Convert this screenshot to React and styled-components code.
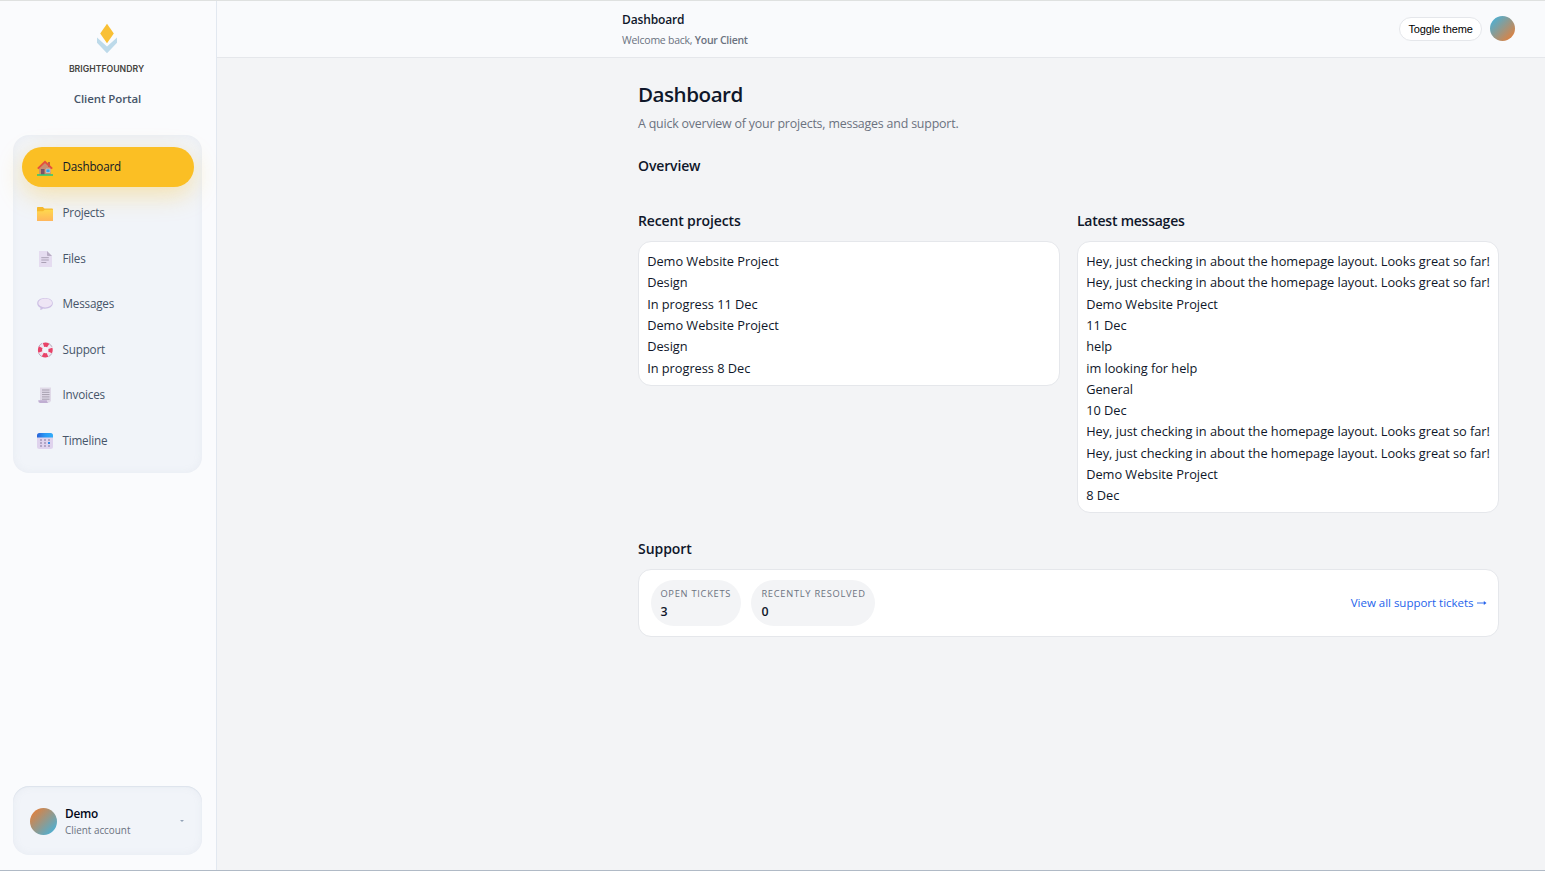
import styled, { createGlobalStyle } from 'styled-components';

const GlobalStyle = createGlobalStyle`
  * {
    box-sizing: border-box;
  }

  body {
    margin: 0;
    font-family: 'Open Sans', 'Noto Sans', sans-serif;
    font-size: 12.8px;
    line-height: 21.3px;
    color: #0f172a;
    background: #f3f4f6;
  }

  h1, h2, p {
    margin: 0;
  }
`;

const Shell = styled.div`
  display: grid;
  grid-template-columns: 217px 1fr;
  height: 871px;
  border-top: 1px solid #dfe1e0;
  border-bottom: 1px solid #b0bac6;
`;

const Sidebar = styled.aside`
  display: flex;
  flex-direction: column;
  padding: 20px 14px 15px 13px;
  background: #fafbfd;
  border-right: 1px solid #e2e8f0;
`;

const Brand = styled.div`
  display: flex;
  flex-direction: column;
  align-items: center;
  height: 114px;
  padding: 2px 2px 0 0;
`;

const BrandName = styled.div`
  margin-top: 8px;
  font-family: Inter, sans-serif;
  font-size: 8.7px;
  font-weight: 600;
  line-height: 14px;
  color: #45443f;
`;

const PortalLabel = styled.div`
  margin: 13px 0 0 2px;
  font-size: 11.5px;
  font-weight: 600;
  line-height: 20px;
  letter-spacing: -0.1px;
  color: #475569;
`;

const Nav = styled.nav`
  display: flex;
  flex-direction: column;
  gap: 5.6px;
  height: 338px;
  padding: 12px 8px 0 9px;
  border-radius: 16px;
  background: #f1f4f9;
  box-shadow: inset 0 0 9px rgba(148, 150, 180, 0.09);
`;

const NavItem = styled.a`
  display: flex;
  align-items: center;
  gap: 9.5px;
  height: 40px;
  padding-left: 15px;
  border-radius: 20px;
  font-size: 11.7px;
  letter-spacing: -0.2px;
  color: ${props => (props.$active ? '#111827' : '#475569')};
  background: ${props => (props.$active ? '#fbbf24' : 'transparent')};
  box-shadow: ${props => (props.$active ? '0 8px 24px rgba(251, 191, 36, 0.35)' : 'none')};

  svg {
    margin-top: 1px;
  }
`;

const Account = styled.div`
  display: flex;
  align-items: center;
  gap: 8px;
  height: 69px;
  margin-top: auto;
  padding: 1px 18px 0 17px;
  border-radius: 16px;
  background: #f1f4f9;
  box-shadow: inset 0 0 9px rgba(148, 150, 180, 0.09), inset 0 1px 1px #e0e7ef;
`;

const Avatar = styled.div`
  flex: none;
  width: ${props => props.$size}px;
  height: ${props => props.$size}px;
  border-radius: 50%;
  background: linear-gradient(135deg, ${props => props.$from}, ${props => props.$to});
`;

const AccountText = styled.div`
  flex: 1;
`;

const AccountName = styled.div`
  font-size: 11.8px;
  font-weight: 600;
  line-height: 18px;
  letter-spacing: -0.2px;
  color: #020617;
`;

const AccountRole = styled.div`
  font-size: 9.9px;
  line-height: 16px;
  color: #6b7280;
`;

const Caret = styled.span`
  border: 2.5px solid transparent;
  border-top: 2.5px solid #94a3b8;
  border-bottom: 0;
`;

const Main = styled.div`
  display: flex;
  flex-direction: column;
`;

const Topbar = styled.header`
  display: flex;
  justify-content: space-between;
  align-items: flex-start;
  height: 57px;
  padding: 0 30px 0 405px;
  background: #f9fafc;
  border-bottom: 1px solid #e5e7eb;
`;

const TopbarText = styled.div`
  padding-top: 9px;
`;

const TopbarTitle = styled.div`
  font-size: 12px;
  font-weight: 600;
  line-height: 20px;
  letter-spacing: -0.14px;
`;

const Welcome = styled.div`
  font-size: 10.5px;
  line-height: 21px;
  letter-spacing: -0.24px;
  color: #6b7280;

  strong {
    font-weight: 600;
    letter-spacing: -0.28px;
  }
`;

const TopbarActions = styled.div`
  display: flex;
  align-items: center;
  gap: 8px;
  padding-top: 15px;
`;

const ThemeButton = styled.button`
  width: 83px;
  height: 24px;
  padding: 0;
  border: 1px solid #e5e7eb;
  border-radius: 12px;
  background: #fff;
  font-family: 'Liberation Sans', sans-serif;
  font-size: 11px;
  letter-spacing: -0.15px;
  color: #000;
`;

const Content = styled.main`
  padding: 20px 46px 0 421px;
`;

const PageTitle = styled.h1`
  font-size: 20.6px;
  font-weight: 600;
  line-height: 32px;
  letter-spacing: -0.48px;
`;

const Lead = styled.p`
  margin-top: 3px;
  font-size: 12.4px;
  line-height: 22px;
  letter-spacing: -0.19px;
  color: #6b7280;
`;

const SectionTitle = styled.h2`
  font-size: 14px;
  font-weight: 600;
  line-height: 22px;
  letter-spacing: ${props => props.$tracking || '-0.14px'};
`;

const Overview = styled.section`
  padding-top: 20px;
`;

const Columns = styled.div`
  display: grid;
  grid-template-columns: 422px 422px;
  gap: 17px;
  align-items: start;
  margin-top: 33px;
`;

const Card = styled.div`
  margin-top: 9px;
  padding: 9.04px 8px 5.8px 8.2px;
  border: 1px solid #e5e7eb;
  border-radius: 13px;
  background: #fff;
`;

const Line = styled.div`
  line-height: 21.3px;
  white-space: nowrap;
  letter-spacing: -0.035px;
`;

const SupportSection = styled.section`
  margin-top: 24.5px;
`;

const SupportCard = styled(Card)`
  display: flex;
  align-items: center;
  gap: 10px;
  height: 68px;
  padding: 0 11px 0 12px;
`;

const Stat = styled.div`
  width: ${props => props.$width}px;
  height: 46px;
  padding: 5px 0 0 ${props => props.$inset || 9.4}px;
  border-radius: 23px;
  background: #f3f4f6;
`;

const StatLabel = styled.div`
  font-size: 9.3px;
  line-height: 17px;
  letter-spacing: 0.72px;
  white-space: nowrap;
  color: #6b7280;
`;

const StatValue = styled.div`
  font-size: 12.4px;
  font-weight: 600;
  line-height: 19px;
`;

const SupportLink = styled.a`
  display: flex;
  align-items: center;
  gap: 3.5px;
  margin-left: auto;
  font-size: 11.5px;
  letter-spacing: -0.02px;
  color: #2563eb;

  svg {
    margin-top: 1px;
  }
`;

const Logo = () => (
  <svg width="20" height="31" viewBox="0 0 20 31">
    <path d="M0 14.5l10 9 10-9v5.3L10 30.2 0 19.8z" fill="#bddaea" />
    <path d="M10 .8l6.8 9.7L10 20.3 3.2 10.5z" fill="#f9c035" />
  </svg>
);

const HomeIcon = () => (
  <>
    <path d="M2.2 7.5L8 2.5l5.8 5V15H2.2z" fill="#c98f70" />
    <path d="M11 2h2v5h-2z" fill="#b5654b" />
    <path d="M.8 8.7L8 1.8l7.2 6.9" fill="none" stroke="#e5503e" strokeWidth="1.8" />
    <path d="M4 9h3.5v6H4z" fill="#7a5365" />
    <path d="M9 9h4v3.5H9z" fill="#35a5ea" stroke="#e9d5ce" strokeWidth=".6" />
    <path d="M0 14.2h16v1.6H0z" fill="#32c976" />
  </>
);

const FolderIcon = () => (
  <>
    <path d="M0 2.8Q0 2 .8 2h5l1.7 1.5H15q1 0 1 1v10.7q0 .8-.8.8H.8Q0 16 0 15.2z" fill="#f5b92e" />
    <path d="M0 6.2h6l1.8-1.4H16v10.4q0 .8-.8.8H.8Q0 16 0 15.2z" fill="url(#folder)" />
  </>
);

const FileIcon = () => (
  <>
    <path d="M2 0h8l5 5v11H2z" fill="#e5dcf0" />
    <path d="M10 0l5 5h-4.2q-.8 0-.8-.8z" fill="#b9adc5" />
    <path d="M4.3 6.7h7.5M4.3 9h7.5M4.3 11.5h5" stroke="#aaa0b5" />
  </>
);

const MessageIcon = () => (
  <>
    <path d="M8 2c4.6 0 7.8 2.1 7.8 5.3S12.6 12.7 8 12.7q-1 0-2-.2-.8 1.5-3 1.3.7-.9.4-2C1.5 10.8.2 9.3.2 7.3.2 4.1 3.4 2 8 2z" fill="#cdbfe4" />
    <ellipse cx="8.2" cy="6.9" rx="6.9" ry="4.5" fill="#eee5f5" />
  </>
);

const SupportIcon = () => (
  <>
    <circle cx="8.3" cy="8" r="5.3" fill="none" stroke="#efe5f0" strokeWidth="4.2" />
    <circle cx="8.3" cy="8" r="5.3" fill="none" stroke="#e84368" strokeWidth="4.2" strokeDasharray="4.9 3.42" strokeDashoffset="2.45" />
    <circle cx="8.3" cy="8" r="7.4" fill="none" stroke="#96839c" strokeWidth=".6" strokeDasharray="4.8 6.82" strokeDashoffset="-3.4" />
  </>
);

const InvoiceIcon = () => (
  <>
    <path d="M3 .5h11V14l-1.5 1.5H3z" fill="#e0d9e8" />
    <path d="M5 3h7.5M5 5.3h7.5M5 7.6h7.5M5 9.9h7.5M5 12.2h7.5" stroke="#a69eae" />
    <path d="M1.2 13.3h8.6q0 2 1.7 2.7H3q-1.8-.3-1.8-2.7z" fill="#c0aed2" />
  </>
);

const CalendarIcon = () => (
  <>
    <rect width="16" height="16" rx="2.5" fill="#dfd3ed" />
    <path d="M0 4.5v-2Q0 0 2.5 0h11Q16 0 16 2.5v2z" fill="url(#calendar)" />
    <path d="M3 7h2M7 7h2M11 7h2M3 10h2M7 10h2M3 13h2M7 13h2M11 13h2" stroke="#a297b8" strokeWidth="1.7" />
    <path d="M11 10h2" stroke="#308be9" strokeWidth="2" />
  </>
);

const Gradients = () => (
  <defs>
    <linearGradient id="folder" x1="0" y1="0" x2="0" y2="1">
      <stop stopColor="#ffd84d" />
      <stop offset="1" stopColor="#ffb65c" />
    </linearGradient>
    <linearGradient id="calendar">
      <stop stopColor="#2862d8" />
      <stop offset=".5" stopColor="#2998f4" />
      <stop offset="1" stopColor="#31adf9" />
    </linearGradient>
  </defs>
);

const navItems = [
  { label: 'Dashboard', Icon: HomeIcon, active: true },
  { label: 'Projects', Icon: FolderIcon },
  { label: 'Files', Icon: FileIcon },
  { label: 'Messages', Icon: MessageIcon },
  { label: 'Support', Icon: SupportIcon },
  { label: 'Invoices', Icon: InvoiceIcon },
  { label: 'Timeline', Icon: CalendarIcon },
];

const projects = [
  { name: 'Demo Website Project', stage: 'Design', status: 'In progress 11 Dec' },
  { name: 'Demo Website Project', stage: 'Design', status: 'In progress 8 Dec' },
];

const checkIn = 'Hey, just checking in about the homepage layout. Looks great so far!';

const messages = [
  { subject: checkIn, body: checkIn, topic: 'Demo Website Project', date: '11 Dec' },
  { subject: 'help', body: 'im looking for help', topic: 'General', date: '10 Dec' },
  { subject: checkIn, body: checkIn, topic: 'Demo Website Project', date: '8 Dec' },
];

const App = () => (
  <>
    <GlobalStyle />
    <Shell>
      <Sidebar>
        <Brand>
          <Logo />
          <BrandName>BRIGHTFOUNDRY</BrandName>
          <PortalLabel>Client Portal</PortalLabel>
        </Brand>

        <Nav>
          {navItems.map(({ label, Icon, active }) => (
            <NavItem key={label} $active={active}>
              <svg width="16" height="16" viewBox="0 0 16 16">
                <Gradients />
                <Icon />
              </svg>
              {label}
            </NavItem>
          ))}
        </Nav>

        <Account>
          <Avatar $size={27} $from="#f47a2a" $to="#38b6e8" />
          <AccountText>
            <AccountName>Demo</AccountName>
            <AccountRole>Client account</AccountRole>
          </AccountText>
          <Caret />
        </Account>
      </Sidebar>

      <Main>
        <Topbar>
          <TopbarText>
            <TopbarTitle>Dashboard</TopbarTitle>
            <Welcome>
              Welcome back, <strong>Your Client</strong>
            </Welcome>
          </TopbarText>
          <TopbarActions>
            <ThemeButton>Toggle theme</ThemeButton>
            <Avatar $size={25} $from="#38b6e8" $to="#f47a2a" />
          </TopbarActions>
        </Topbar>

        <Content>
          <PageTitle>Dashboard</PageTitle>
          <Lead>A quick overview of your projects, messages and support.</Lead>

          <Overview>
            <SectionTitle>Overview</SectionTitle>
            <Columns>
              <div>
                <SectionTitle>Recent projects</SectionTitle>
                <Card>
                  {projects.map((project, i) => (
                    <div key={i}>
                      <Line>{project.name}</Line>
                      <Line>{project.stage}</Line>
                      <Line>{project.status}</Line>
                    </div>
                  ))}
                </Card>
              </div>
              <div>
                <SectionTitle $tracking="-0.24px">Latest messages</SectionTitle>
                <Card>
                  {messages.map((message, i) => (
                    <div key={i}>
                      <Line>{message.subject}</Line>
                      <Line>{message.body}</Line>
                      <Line>{message.topic}</Line>
                      <Line>{message.date}</Line>
                    </div>
                  ))}
                </Card>
              </div>
            </Columns>
          </Overview>

          <SupportSection>
            <SectionTitle $tracking="-0.06px">Support</SectionTitle>
            <SupportCard>
              <Stat $width={90}>
                <StatLabel>OPEN TICKETS</StatLabel>
                <StatValue>3</StatValue>
              </Stat>
              <Stat $width={124} $inset={10.4}>
                <StatLabel>RECENTLY RESOLVED</StatLabel>
                <StatValue>0</StatValue>
              </Stat>
              <SupportLink>
                View all support tickets
                <svg width="10" height="6" viewBox="0 0 10 6">
                  <path d="M0 3h8" stroke="currentColor" strokeWidth=".9" />
                  <path d="M6.8 1.1L9.5 3 6.8 4.9z" fill="currentColor" />
                </svg>
              </SupportLink>
            </SupportCard>
          </SupportSection>
        </Content>
      </Main>
    </Shell>
  </>
);

export default App;
